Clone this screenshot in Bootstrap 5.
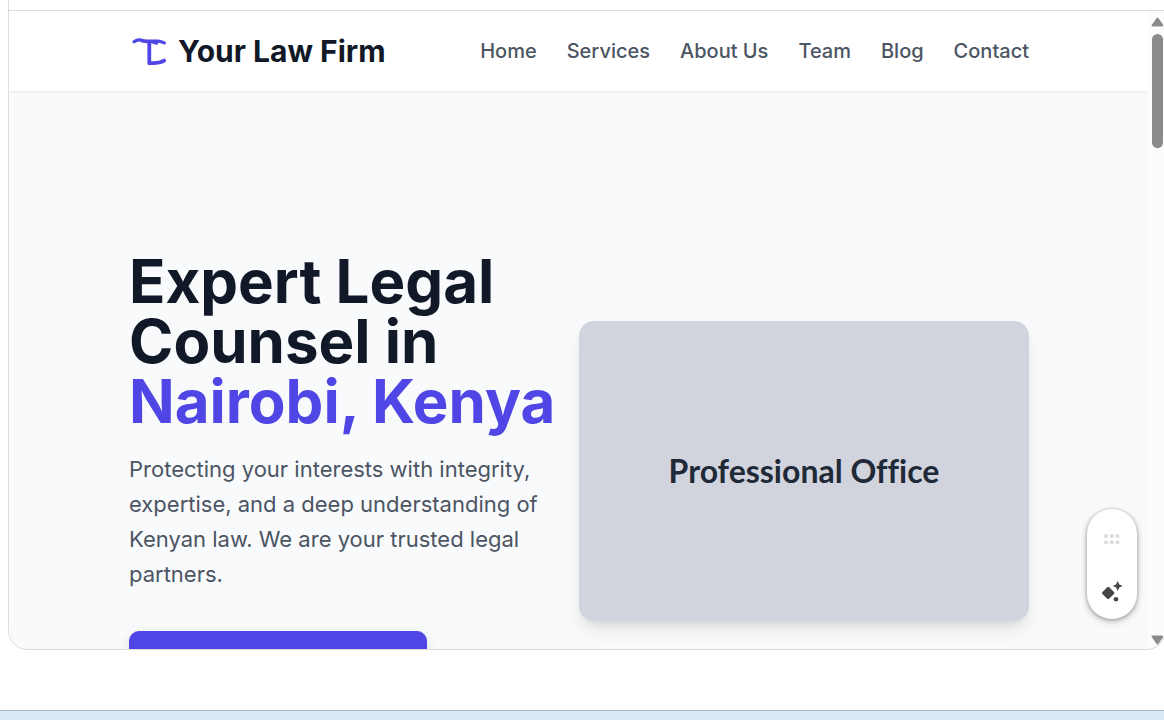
<!DOCTYPE html>
<html lang="en">
<head>
<meta charset="utf-8">
<meta name="viewport" content="width=device-width, initial-scale=1">
<title>Your Law Firm</title>
<link href="https://cdn.jsdelivr.net/npm/bootstrap@5.3.0/dist/css/bootstrap.min.css" rel="stylesheet">
<style>
  body { font-family: Inter, "Liberation Sans", sans-serif; color: #111827; background: #fff; }
  .preview { margin: 0 -2px 60px 8px; border: 1px solid #dcdcdc; border-top: 0; border-radius: 0 0 20px 20px; min-height: 0; }
  .preview-bar { height: 11px; border-bottom: 1px solid #dcdcdc; }
  .preview-body { min-height: 0; }
  .site { background: #f9fafc; min-width: 0; }
  .site-header { height: 80px; box-shadow: 0 1px 3px rgba(0,0,0,.07); }
  .site-pad { padding-left: 120px; padding-right: 119px; }
  .brand { font-size: 30px; line-height: 40px; font-weight: 700; color: #111827; padding: 0; }
  .brand-mark { margin-right: 7px; }
  .site-nav { gap: 30px; font-size: 20px; line-height: 30px; font-weight: 500; }
  .site-nav .nav-link { color: #4b5563; padding: 0; }
  .hero { padding-top: 160px; }
  .hero-title { font-size: 60px; line-height: 60px; font-weight: 700; margin-bottom: 21px; white-space: nowrap; }
  .accent { color: #4f46e5; }
  .hero-text { font-size: 22px; line-height: 35px; color: #4b5563; margin-bottom: 39px; }
  .btn-cta { --bs-btn-color: #fff; --bs-btn-bg: #4f46e5; --bs-btn-border-color: #4f46e5; --bs-btn-hover-color: #fff; --bs-btn-hover-bg: #4338ca; width: 298px; height: 60px; border-radius: 10px; box-shadow: 0 4px 12px rgba(0,0,0,.12); }
  .office { height: 300px; border-radius: 15px; background: #d1d4dd; color: #1f2937; font: 700 32px/40px Lato, sans-serif; font-variant-ligatures: none; box-shadow: 0 12px 20px -4px rgba(0,0,0,.1), 0 5px 8px -4px rgba(0,0,0,.1); }
  .scroller { width: 17px; background: #fcfcfc; padding: 6px 2px 4px 3px; }
  .scroller svg { margin-left: -1px; }
  .thumb { height: 114px; width: 11px; border-radius: 6px; background: #8b8b8b; margin: 7px 0 0 1px; }
  .tools { right: 28px; bottom: 30px; width: 50px; height: 110px; border-radius: 25px; padding: 20px 0 15px; box-shadow: 0 1px 4px rgba(0,0,0,.35), 0 3px 8px rgba(0,0,0,.15); }
  .next-panel { height: 10px; background: #d9ebf4; border-top: 1px solid #a9b7bf; }
</style>
</head>
<body>
<div class="vh-100 d-flex flex-column overflow-hidden">
  <main class="preview position-relative d-flex flex-column flex-fill overflow-hidden">
    <div class="preview-bar flex-shrink-0"></div>
    <div class="preview-body d-flex flex-fill">
      <div class="site flex-fill overflow-hidden">
        <header class="site-header site-pad bg-white d-flex align-items-center justify-content-between position-relative">
          <a class="brand navbar-brand d-flex align-items-center m-0" href="#">
            <svg class="brand-mark" width="42" height="40" viewBox="0 0 42 40" fill="none" stroke="#4f46e5" stroke-linecap="round" stroke-linejoin="round" aria-hidden="true">
              <path stroke-width="3.200" d="M5 10.800c3-2.300 6-2.400 9-1.300 5 1.300 10 .2 15 .6 2.500.2 4.500.8 6.300 1.800"/>
              <path stroke-width="3.800" d="M20.300 11v21.300M20.300 31.900c6 .6 10.500.2 14.800-2.300"/>
              <path stroke-width="2.600" d="M13 10.300c3 .9 6 .4 10 .7l4.500 1.600 1-1.500"/>
            </svg>
            <span>Your Law Firm</span>
          </a>
          <nav class="site-nav nav flex-nowrap text-nowrap" aria-label="Main">
            <a class="nav-link" href="#">Home</a>
            <a class="nav-link" href="#">Services</a>
            <a class="nav-link" href="#">About Us</a>
            <a class="nav-link" href="#">Team</a>
            <a class="nav-link" href="#">Blog</a>
            <a class="nav-link" href="#">Contact</a>
          </nav>
        </header>
        <section class="hero site-pad">
          <div class="row g-0 align-items-center">
            <div class="col-6">
              <h1 class="hero-title">Expert Legal<br>Counsel in<br><span class="accent">Nairobi, Kenya</span></h1>
              <p class="hero-text">Protecting your interests with integrity, expertise, and a deep understanding of Kenyan law. We are your trusted legal partners.</p>
              <button class="btn btn-cta d-block" type="button" aria-label="Contact"></button>
            </div>
            <div class="col-6">
              <div class="office d-flex align-items-center justify-content-center"><span>Professional Office</span></div>
            </div>
          </div>
        </section>
      </div>
      <div class="scroller d-flex flex-column align-items-center flex-shrink-0" aria-hidden="true">
        <svg class="flex-shrink-0" width="13" height="10" viewBox="0 0 13 10" fill="#8b8b8b" stroke="#8b8b8b" stroke-width="2" stroke-linejoin="round"><path d="M7.500 1.500 12.500 8.500h-10z"/></svg>
        <div class="thumb flex-shrink-0"></div>
        <svg class="mt-auto flex-shrink-0" width="13" height="10" viewBox="0 0 13 10" fill="#8b8b8b" stroke="#8b8b8b" stroke-width="2" stroke-linejoin="round"><path d="M7.500 8.500 12.500 1.500h-10z"/></svg>
      </div>
    </div>
    <div class="tools position-absolute bg-white d-flex flex-column align-items-center justify-content-between">
      <button class="btn border-0 p-0 lh-1 d-flex" type="button" aria-label="Move">
        <svg width="20" height="20" viewBox="0 0 20 20" fill="#dcdcdc"><circle cx="4" cy="7" r="2"/><circle cx="9.800" cy="7" r="2"/><circle cx="15.500" cy="7" r="2"/><circle cx="4" cy="13.300" r="2"/><circle cx="9.800" cy="13.300" r="2"/><circle cx="15.500" cy="13.300" r="2"/></svg>
      </button>
      <button class="btn border-0 p-0 lh-1 d-flex" type="button" aria-label="Assist">
        <svg width="24" height="24" viewBox="0 0 24 24" fill="#444746"><path d="M7.300 7.200q.9-.8 1.800 0l4.900 4.900q.8.900 0 1.800l-4.900 4.800q-.9.800-1.800 0l-4.900-4.800q-.8-.9 0-1.800z"/><path d="M17.700 1l1.600 3.400L22.700 6l-3.400 1.600-1.600 3.400-1.600-3.400L12.700 6l3.400-1.600z"/><circle cx="16" cy="19.200" r="2.300"/></svg>
      </button>
    </div>
  </main>
  <footer class="next-panel flex-shrink-0"></footer>
</div>
<script src="https://cdn.jsdelivr.net/npm/bootstrap@5.3.0/dist/js/bootstrap.bundle.min.js"></script>
</body>
</html>
